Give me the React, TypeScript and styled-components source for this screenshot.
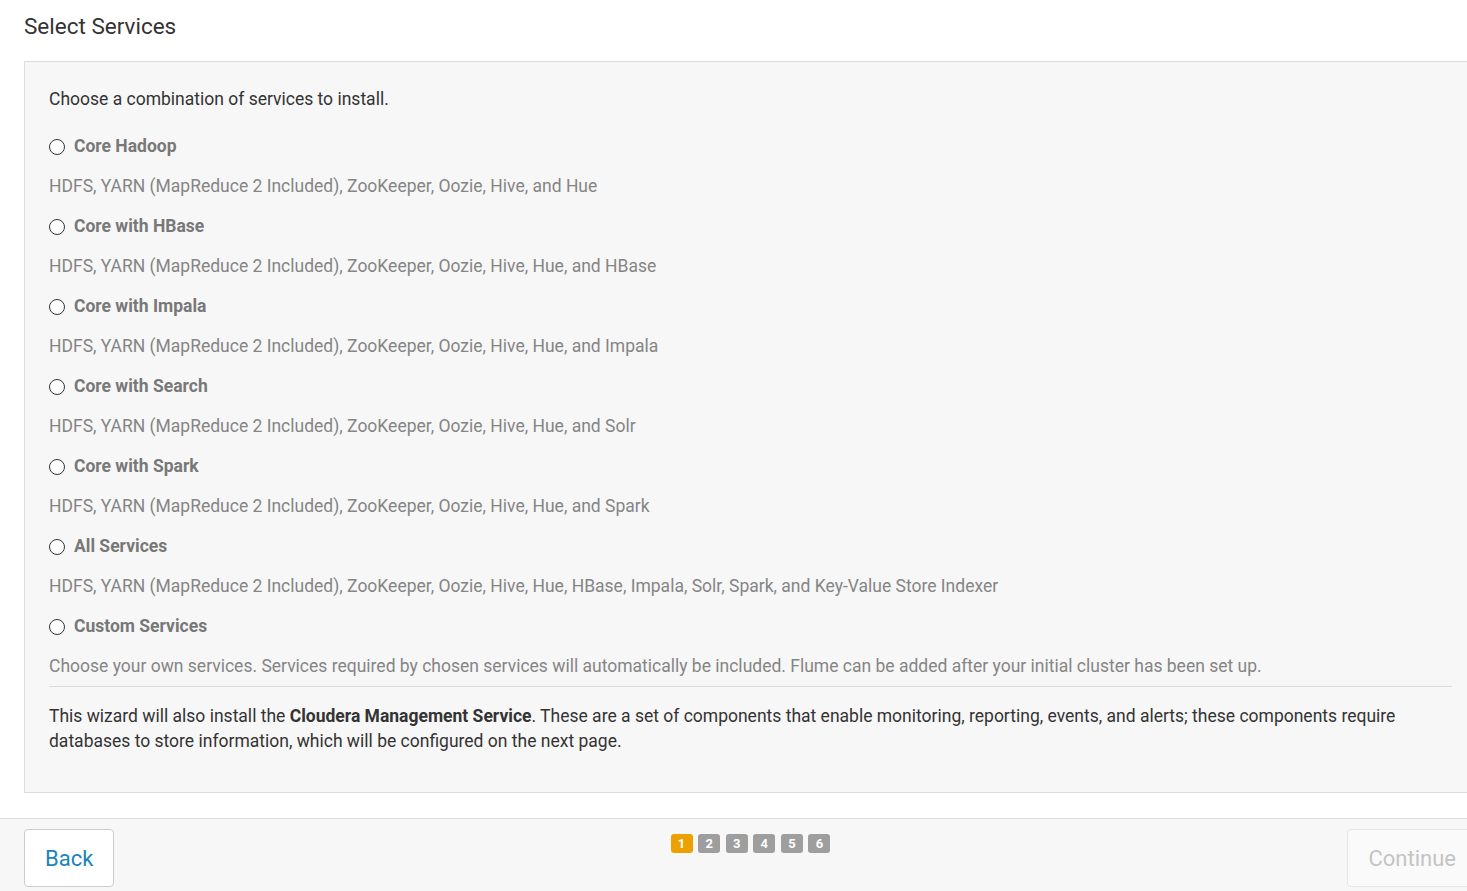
import React from "react";
import styled, { createGlobalStyle } from "styled-components";

const Global = createGlobalStyle`
  html, body { margin: 0; padding: 0; background: #fff; overflow: hidden; }
  body { font-family: Roboto, "Liberation Sans", sans-serif; color: #333; }
`;

const Page = styled.div`
  width: 1501px;
  box-sizing: border-box;
`;

const Header = styled.div`
  padding: 11px 24px 0;
`;

const Title = styled.h1`
  margin: 0;
  font-size: 22.5px;
  font-weight: 400;
  line-height: 31px;
  color: #333;
`;

const Panel = styled.section`
  margin: 19px 24px 0;
  border: 1px solid #dcdcdc;
  background: #f7f7f7;
  padding: 25px 24px 38px;
  font-size: 17.5px;
  line-height: 25px;
`;

const Intro = styled.p`
  margin: 0 0 22px;
  color: #333;
`;

const OptionList = styled.div`
  display: flex;
  flex-direction: column;
`;

const Option = styled.div`
  display: flex;
  flex-direction: column;
  gap: 15px;
  & + & { margin-top: 15px; }
`;

const OptionLabel = styled.label`
  display: flex;
  align-items: center;
  gap: 9px;
  font-weight: 700;
  color: #787878;
  cursor: pointer;
`;

const Radio = styled.span`
  width: 14px;
  height: 14px;
  border: 1px solid #333;
  border-radius: 50%;
  background: #fff;
  flex: none;
`;

const Desc = styled.div`
  color: #858585;
`;

const Divider = styled.hr`
  border: 0;
  border-top: 1px solid #dcdcdc;
  margin: 7px 0 17px;
`;

const Note = styled.p`
  margin: 0;
  color: #333;
  b { font-weight: 700; }
`;

const Footer = styled.footer`
  margin-top: 25px;
  border-top: 1px solid #dcdcdc;
  background: #f7f7f7;
  padding: 10px 24px 10px;
  display: grid;
  grid-template-columns: 1fr auto 1fr;
  align-items: start;
  height: 80px;
  box-sizing: border-box;
`;

const Button = styled.button<{ $disabled?: boolean }>`
  font-family: Roboto, "Liberation Sans", sans-serif;
  font-size: 22px;
  height: 58px;
  padding: 0 20px;
  border-radius: 4px;
  border: 1px solid ${(p) => (p.$disabled ? "#e6e6e6" : "#cccccc")};
  background: ${(p) => (p.$disabled ? "#fafafa" : "#fff")};
  color: ${(p) => (p.$disabled ? "#c4c4c4" : "#1a85b8")};
  cursor: ${(p) => (p.$disabled ? "default" : "pointer")};
`;

const Left = styled.div`
  display: flex;
  justify-content: flex-start;
`;

const Right = styled.div`
  display: flex;
  justify-content: flex-end;
`;

const Steps = styled.div`
  display: flex;
  gap: 5.6px;
  padding-top: 5px;
`;

const Step = styled.span<{ $active?: boolean }>`
  width: 22px;
  height: 19px;
  border-radius: 3px;
  background: ${(p) => (p.$active ? "#eba100" : "#9e9e9e")};
  color: #fff;
  font-size: 13px;
  font-weight: 700;
  display: flex;
  align-items: center;
  justify-content: center;
`;

const options = [
  ["Core Hadoop", "HDFS, YARN (MapReduce 2 Included), ZooKeeper, Oozie, Hive, and Hue"],
  ["Core with HBase", "HDFS, YARN (MapReduce 2 Included), ZooKeeper, Oozie, Hive, Hue, and HBase"],
  ["Core with Impala", "HDFS, YARN (MapReduce 2 Included), ZooKeeper, Oozie, Hive, Hue, and Impala"],
  ["Core with Search", "HDFS, YARN (MapReduce 2 Included), ZooKeeper, Oozie, Hive, Hue, and Solr"],
  ["Core with Spark", "HDFS, YARN (MapReduce 2 Included), ZooKeeper, Oozie, Hive, Hue, and Spark"],
  ["All Services", "HDFS, YARN (MapReduce 2 Included), ZooKeeper, Oozie, Hive, Hue, HBase, Impala, Solr, Spark, and Key-Value Store Indexer"],
  ["Custom Services", "Choose your own services. Services required by chosen services will automatically be included. Flume can be added after your initial cluster has been set up."],
];

export default function App() {
  return (
    <Page>
      <Global />
      <Header>
        <Title>Select Services</Title>
      </Header>
      <Panel>
        <Intro>Choose a combination of services to install.</Intro>
        <OptionList>
          {options.map(([label, desc]) => (
            <Option key={label}>
              <OptionLabel>
                <Radio />
                {label}
              </OptionLabel>
              <Desc>{desc}</Desc>
            </Option>
          ))}
        </OptionList>
        <Divider />
        <Note>
          This wizard will also install the <b>Cloudera Management Service</b>. These are a set of components that enable monitoring, reporting, events, and alerts; these components require databases to store information, which will be configured on the next page.
        </Note>
      </Panel>
      <Footer>
        <Left>
          <Button>Back</Button>
        </Left>
        <Steps>
          {[1, 2, 3, 4, 5, 6].map((n) => (
            <Step key={n} $active={n === 1}>{n}</Step>
          ))}
        </Steps>
        <Right>
          <Button $disabled>Continue</Button>
        </Right>
      </Footer>
    </Page>
  );
}
